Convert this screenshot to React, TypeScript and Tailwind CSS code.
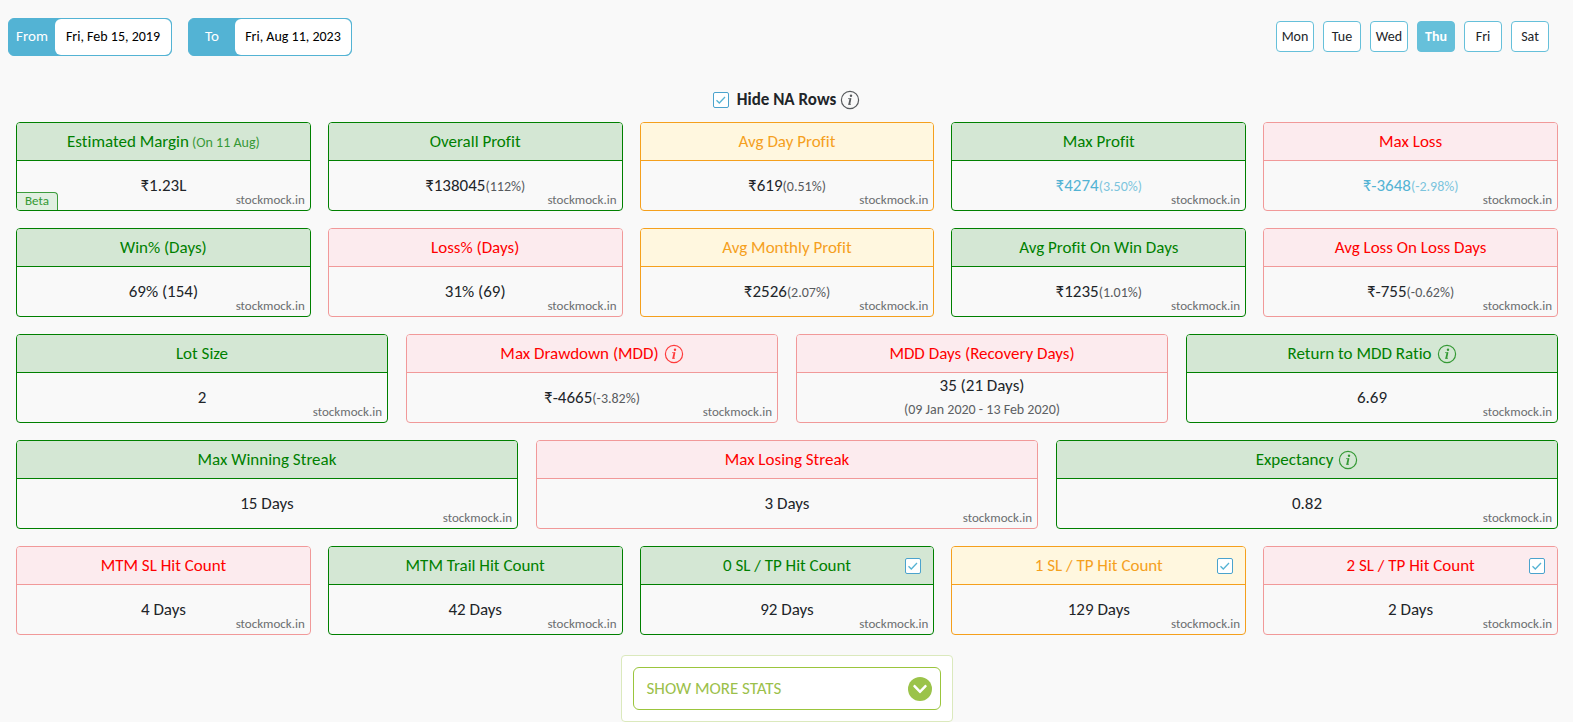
import { FaChevronDown } from "react-icons/fa";
import clsx from "clsx";

type Tone = "green" | "red" | "amber";

type Stat = {
  title: string;
  titleNote?: string;
  value: string;
  note?: string;
  subtitle?: string;
  tone: Tone;
  link?: boolean;
  info?: boolean;
  checkbox?: boolean;
  beta?: boolean;
};

const days = ["Mon", "Tue", "Wed", "Thu", "Fri", "Sat"];

const rows: { columns: string; stats: Stat[] }[] = [
  {
    columns: "grid-cols-5 gap-[17px]",
    stats: [
      { title: "Estimated Margin", titleNote: "(On 11 Aug)", value: "₹1.23L", tone: "green", beta: true },
      { title: "Overall Profit", value: "₹138045", note: "(112%)", tone: "green" },
      { title: "Avg Day Profit", value: "₹619", note: "(0.51%)", tone: "amber" },
      { title: "Max Profit", value: "₹4274", note: "(3.50%)", tone: "green", link: true },
      { title: "Max Loss", value: "₹-3648", note: "(-2.98%)", tone: "red", link: true },
    ],
  },
  {
    columns: "grid-cols-5 gap-[17px]",
    stats: [
      { title: "Win% (Days)", value: "69% (154)", tone: "green" },
      { title: "Loss% (Days)", value: "31% (69)", tone: "red" },
      { title: "Avg Monthly Profit", value: "₹2526", note: "(2.07%)", tone: "amber" },
      { title: "Avg Profit On Win Days", value: "₹1235", note: "(1.01%)", tone: "green" },
      { title: "Avg Loss On Loss Days", value: "₹-755", note: "(-0.62%)", tone: "red" },
    ],
  },
  {
    columns: "grid-cols-4 gap-[18px]",
    stats: [
      { title: "Lot Size", value: "2", tone: "green" },
      { title: "Max Drawdown (MDD)", value: "₹-4665", note: "(-3.82%)", tone: "red", info: true },
      {
        title: "MDD Days (Recovery Days)",
        value: "35 (21 Days)",
        subtitle: "(09 Jan 2020 - 13 Feb 2020)",
        tone: "red",
      },
      { title: "Return to MDD Ratio", value: "6.69", tone: "green", info: true },
    ],
  },
  {
    columns: "grid-cols-3 gap-[18px]",
    stats: [
      { title: "Max Winning Streak", value: "15 Days", tone: "green" },
      { title: "Max Losing Streak", value: "3 Days", tone: "red" },
      { title: "Expectancy", value: "0.82", tone: "green", info: true },
    ],
  },
  {
    columns: "grid-cols-5 gap-[17px]",
    stats: [
      { title: "MTM SL Hit Count", value: "4 Days", tone: "red" },
      { title: "MTM Trail Hit Count", value: "42 Days", tone: "green" },
      { title: "0 SL / TP Hit Count", value: "92 Days", tone: "green", checkbox: true },
      { title: "1 SL / TP Hit Count", value: "129 Days", tone: "amber", checkbox: true },
      { title: "2 SL / TP Hit Count", value: "2 Days", tone: "red", checkbox: true },
    ],
  },
];

const cardTones = {
  green: "border-[#008000]",
  red: "border-[#f19999]",
  amber: "border-[#f5a01d]",
};

const headerTones = {
  green: "border-[#008000] bg-[#d4e7d4] text-[#008000]",
  red: "border-[#f19999] bg-[#fcebee] text-[#ff0000]",
  amber: "border-[#f5a01d] bg-[#fff7df] text-[#f5a01d]",
};

const InfoIcon = () => (
  <svg viewBox="0 0 20 20" className="size-5 shrink-0 opacity-75" fill="none" stroke="currentColor">
    <circle cx="10" cy="10" r="8.6" strokeWidth="1.2" />
    <circle cx="11" cy="5.8" r="1.2" fill="currentColor" stroke="none" />
    <path d="M8.3 8.6h1.2M8.2 14.3h2.6" strokeWidth="1" />
    <path d="M10.5 8.2L9.3 14.4" strokeWidth="1.8" />
  </svg>
);

const Checkbox = ({ id, label }: { id: string; label?: string }) => (
  <span className="grid size-4 shrink-0">
    <input
      id={id}
      type="checkbox"
      defaultChecked
      aria-label={label}
      className="peer col-start-1 row-start-1 size-4 appearance-none rounded-xs border border-[#4ba3cd] bg-white"
    />
    <svg
      viewBox="0 0 16 16"
      className="pointer-events-none invisible col-start-1 row-start-1 size-4 peer-checked:visible"
      fill="none"
      stroke="#56b3d4"
      strokeWidth="1.3"
    >
      <path d="M3.5 8.2l2.8 2.8 5.7-6" />
    </svg>
  </span>
);

const DateField = ({ id, label, value }: { id: string; label: string; value: string }) => (
  <div className="flex h-[38px] rounded-md border border-[#53b3d4] bg-[#53b3d4] text-sm">
    <label htmlFor={id} className="flex w-[46px] items-center justify-center text-[15px] text-white">
      {label}
    </label>
    <input
      id={id}
      type="text"
      defaultValue={value}
      className="w-[116px] rounded-md bg-white text-center text-black outline-none"
    />
  </div>
);

const StatCard = ({ stat }: { stat: Stat }) => {
  return (
    <section className={clsx("relative flex h-[89px] flex-col rounded-sm border", cardTones[stat.tone])}>
      <header
        className={clsx(
          "relative flex h-[38px] shrink-0 items-center justify-center gap-[5px] rounded-t-[3px] border-b",
          headerTones[stat.tone],
        )}
      >
        <h2>
          {stat.title}
          {stat.titleNote && <span className="text-sm opacity-75"> {stat.titleNote}</span>}
        </h2>
        {stat.info && <InfoIcon />}
        {stat.checkbox && (
          <span className="absolute right-3">
            <Checkbox id={stat.title} label={stat.title} />
          </span>
        )}
      </header>
      <div className="flex flex-1 flex-col items-center justify-center">
        <p className={stat.link ? "text-[#53b3d4]" : "text-[#212529]"}>
          {stat.value}
          {stat.note && <span className="text-sm opacity-75">{stat.note}</span>}
        </p>
        {stat.subtitle && <p className="text-sm leading-6 text-[#5c6063]">{stat.subtitle}</p>}
      </div>
      {!stat.subtitle && (
        <span className="absolute right-[5px] bottom-0 text-[13px] leading-5 text-[#6b6e70]">stockmock.in</span>
      )}
      {stat.beta && (
        <span className="absolute bottom-0 left-0 h-[18px] rounded-tr-sm rounded-bl-[3px] border-t border-r border-[#3c9c3c] bg-[#e1efe1] px-2 text-[13px] leading-4 text-[#339933]">
          Beta
        </span>
      )}
    </section>
  );
};

const App = () => {
  return (
    <main className="min-h-screen bg-[#f9f9f9] font-[Carlito,Calibri,Lato,sans-serif] text-[17px] leading-6 text-[#212529] [font-variant-ligatures:none]">
      <div className="flex items-start justify-between pt-[18px] pr-6 pl-2">
        <div className="flex gap-4">
          <DateField id="from" label="From" value="Fri, Feb 15, 2019" />
          <DateField id="to" label="To" value="Fri, Aug 11, 2023" />
        </div>
        <div className="flex gap-[9px] pt-[3px]">
          {days.map((day) => (
            <button
              key={day}
              type="button"
              className={clsx(
                "h-[31px] w-[38px] rounded-sm border border-[#66c0da] text-sm",
                day === "Thu" ? "bg-[#66c0da] font-bold text-white" : "bg-white text-[#212529]",
              )}
            >
              {day}
            </button>
          ))}
        </div>
      </div>

      <div className="mt-8 flex items-center justify-center">
        <Checkbox id="hide-na" />
        <label htmlFor="hide-na" className="pr-1 pl-2 font-bold">
          Hide NA Rows
        </label>
        <InfoIcon />
      </div>

      <div className="mt-[10px] flex flex-col gap-[17px] pr-[15px] pl-4">
        {rows.map((row, i) => (
          <div key={i} className={clsx("grid", row.columns)}>
            {row.stats.map((stat) => (
              <StatCard key={stat.title} stat={stat} />
            ))}
          </div>
        ))}
      </div>

      <div className="mx-auto mt-5 w-[332px] rounded-sm border border-[#dbe9bd] bg-white p-[11px]">
        <button
          type="button"
          className="flex h-[43px] w-full items-center justify-between rounded-md border border-[#9bc53d] pr-2 pl-[13px] text-[#9bc04a]"
        >
          SHOW MORE STATS
          <span className="flex size-6 items-center justify-center rounded-full bg-[#9bc34a] text-white">
            <FaChevronDown className="size-4" />
          </span>
        </button>
      </div>
    </main>
  );
};

export default App;
